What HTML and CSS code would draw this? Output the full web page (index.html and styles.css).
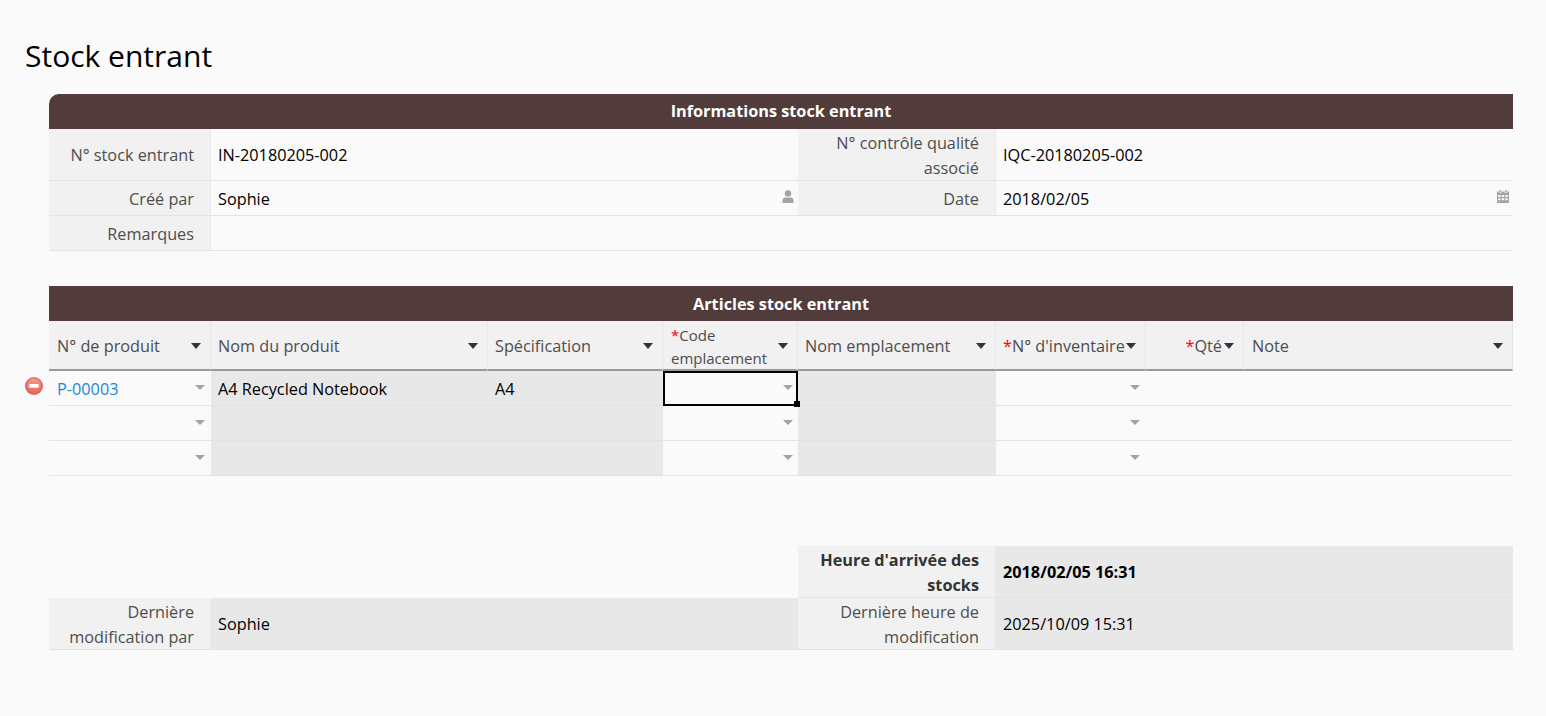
FILE: index.html
```html
<!DOCTYPE html>
<html lang="fr">
<head>
<meta charset="utf-8">
<title>Stock entrant</title>
<link rel="stylesheet" href="styles.css">
</head>
<body>
<h1 class="title">Stock entrant</h1>
<main class="sheet">
  <section class="grid info">
    <div class="band">Informations stock entrant</div>
    <div class="cell label tall s1">N° stock entrant</div>
    <div class="cell value tall s3">IN-20180205-002</div>
    <div class="cell label tall s1b">N° contrôle qualité associé</div>
    <div class="cell value tall s3b">IQC-20180205-002</div>
    <div class="cell label s1">Créé par</div>
    <div class="cell value s3 has-icon">Sophie
      <svg class="field-icon" viewBox="0 0 12 13"><circle cx="6" cy="3.4" r="3.2"/><path d="M0.5 13 V10.200 C0.5 8.200 2.200 7.400 3.600 7.400 H8.400 C9.800 7.400 11.500 8.200 11.500 10.200 V13 Z"/></svg>
    </div>
    <div class="cell label s1b">Date</div>
    <div class="cell value s3b has-icon">2018/02/05
      <svg class="field-icon" viewBox="0 0 12 13"><path fill-rule="evenodd" d="M2.5 0h1.4v2H2.5zM8.100 0h1.400v2H8.100zM0 1.500h2v1.300h2.400V1.500h3.200v1.300H10V1.500h2V13H0zM1.200 5v2h2.400V5zM4.800 5v2h2.400V5zM8.400 5v2h2.400V5zM1.200 8.200v2h2.400v-2zM4.800 8.200v2h2.400v-2zM8.400 8.200v2h2.400v-2z"/></svg>
    </div>
    <div class="cell label s1">Remarques</div>
    <div class="cell value s7"></div>
  </section>

  <section class="grid items">
    <div class="band">Articles stock entrant</div>
    <div class="head inset"><span class="head-text">N° de produit</span><i class="sort"></i></div>
    <div class="head"><span class="head-text">Nom du produit</span><i class="sort"></i></div>
    <div class="head"><span class="head-text">Spécification</span><i class="sort"></i></div>
    <div class="head inset"><span class="head-text wrap"><b class="req">*</b>Code emplacement</span><i class="sort"></i></div>
    <div class="head"><span class="head-text">Nom emplacement</span><i class="sort"></i></div>
    <div class="head"><span class="head-text"><b class="req">*</b>N° d'inventaire</span><i class="sort"></i></div>
    <div class="head end"><span class="head-text"><b class="req">*</b>Qté</span><i class="sort"></i></div>
    <div class="head inset"><span class="head-text">Note</span><i class="sort"></i></div>

    <div class="cell value drop first"><a class="link" href="#">P-00003</a><i class="caret"></i>
      <svg class="remove" viewBox="0 0 18 18">
        <defs><linearGradient id="removeFill" x1="0" y1="0" x2="0" y2="1"><stop offset="0" stop-color="#ee9a8e"/><stop offset="1" stop-color="#e8695d"/></linearGradient></defs>
        <circle cx="9" cy="9" r="9" fill="#e2665a"/><circle cx="9" cy="8.500" r="7.200" fill="url(#removeFill)"/><rect x="4.200" y="7" width="9.600" height="3.800" rx="0.800" fill="#fff"/>
      </svg>
    </div>
    <div class="cell ro">A4 Recycled Notebook</div>
    <div class="cell ro">A4</div>
    <div class="cell value drop code active"><i class="caret"></i><i class="handle"></i></div>
    <div class="cell ro"></div>
    <div class="cell value drop"><i class="caret"></i></div>
    <div class="cell value"></div>
    <div class="cell value"></div>

    <div class="cell value drop"><i class="caret"></i></div>
    <div class="cell ro"></div>
    <div class="cell ro"></div>
    <div class="cell value drop code"><i class="caret"></i></div>
    <div class="cell ro"></div>
    <div class="cell value drop"><i class="caret"></i></div>
    <div class="cell value"></div>
    <div class="cell value"></div>

    <div class="cell value drop"><i class="caret"></i></div>
    <div class="cell ro"></div>
    <div class="cell ro"></div>
    <div class="cell value drop code"><i class="caret"></i></div>
    <div class="cell ro"></div>
    <div class="cell value drop"><i class="caret"></i></div>
    <div class="cell value"></div>
    <div class="cell value"></div>
  </section>

  <section class="grid summary">
    <div class="blank"></div>
    <div class="cell label tall s1b strong">Heure d'arrivée des stocks</div>
    <div class="cell ro tall s3b strong-value">2018/02/05 16:31</div>
    <div class="cell label tall s1">Dernière modification par</div>
    <div class="cell ro tall s3">Sophie</div>
    <div class="cell label tall s1b">Dernière heure de modification</div>
    <div class="cell ro tall s3b">2025/10/09 15:31</div>
  </section>
</main>
</body>
</html>
```
FILE: styles.css
```css
* { box-sizing: border-box; }
html, body { margin: 0; height: 100%; }
body {
  background: #fafafa;
  color: #000;
  font-family: "Open Sans", "Liberation Sans", sans-serif;
  font-size: 16.25px;
  overflow: hidden;
}
.title {
  margin: 0;
  padding: 35px 0 0 25px;
  height: 94px;
  font-size: 30px;
  font-weight: 400;
  line-height: 41px;
}
.sheet { margin-left: 49px; width: 1464px; }
.grid {
  display: grid;
  grid-template-columns: 162px 277px 175px 135px 198px 150px 98px 269px;
  grid-auto-rows: 35px;
}
.items { margin-top: 35px; grid-template-rows: 35px 50px 35px 35px 35px; }
.info { grid-template-rows: 35px 52px 35px 35px; }
.summary { margin-top: 70px; grid-template-rows: 52px 52px; }
.band {
  grid-column: 1 / -1;
  background: #513c3b;
  color: #fff;
  font-weight: 700;
  text-align: center;
  height: 35px;
  line-height: 36px;
}
.info .band { border-radius: 10px 0 0 0; line-height: 35px; }
.cell {
  display: flex;
  align-items: center;
  position: relative;
  padding: 2px 7px 0;
  border-bottom: 1px solid #e3e3e3;
  min-width: 0;
  line-height: 25px;
}
.label {
  background: #f1f1f1;
  color: #4d4d4d;
  justify-content: flex-end;
  text-align: right;
  padding-right: 16px;
  border-right: 1px solid #ebebeb;
}
.value { background: #fafafa; }
.ro { background: #e8e8e8; }
.s1 { grid-column: 1; }
.s3 { grid-column: 2 / span 3; }
.s1b { grid-column: 5; }
.s3b { grid-column: 6 / span 3; }
.s7 { grid-column: 2 / span 7; }
.blank { grid-column: 1 / span 4; }
.strong { font-weight: 700; color: #333; }
.strong-value { font-weight: 700; }
.has-icon { padding-right: 0; }
.field-icon {
  position: absolute;
  right: 4px;
  top: 9px;
  width: 12px;
  height: 13px;
  fill: #a3a3a3;
}
.head {
  display: flex;
  align-items: center;
  justify-content: space-between;
  background: #f1f1f1;
  color: #4d4d4d;
  padding: 1px 9px 0 7px;
  border-right: 1px solid #e6e6e6;
  border-bottom: 2px solid #9a9a9a;
  line-height: 22px;
  min-width: 0;
}
.inset { padding-left: 8px; }
.head:last-of-type { border-right: 0; }
.head-text { white-space: nowrap; }
.head-text.wrap { white-space: normal; width: 105px; line-height: 23px; font-size: 15px; margin-top: 3px; }
.end { justify-content: flex-end; gap: 2px; }
.req { color: #f00; font-weight: 400; }
.sort {
  flex: none;
  width: 0;
  height: 0;
  border-left: 5.5px solid transparent;
  border-right: 5.500px solid transparent;
  border-top: 6px solid #333;
}
.caret {
  position: absolute;
  right: 6px;
  top: 14px;
  width: 0;
  height: 0;
  border-left: 5px solid transparent;
  border-right: 5px solid transparent;
  border-top: 5px solid #a3a3a3;
}
.code .caret { right: 5px; }
.link { color: #1a87d6; text-decoration: none; }
.first { padding-left: 8px; }
.remove {
  position: absolute;
  left: -24px;
  top: 6px;
  width: 18px;
  height: 18px;
}
.active { outline: 2px solid #000; outline-offset: -2px; z-index: 1; }
.handle {
  position: absolute;
  right: -2px;
  bottom: -2px;
  width: 6px;
  height: 6px;
  background: #000;
}
```
